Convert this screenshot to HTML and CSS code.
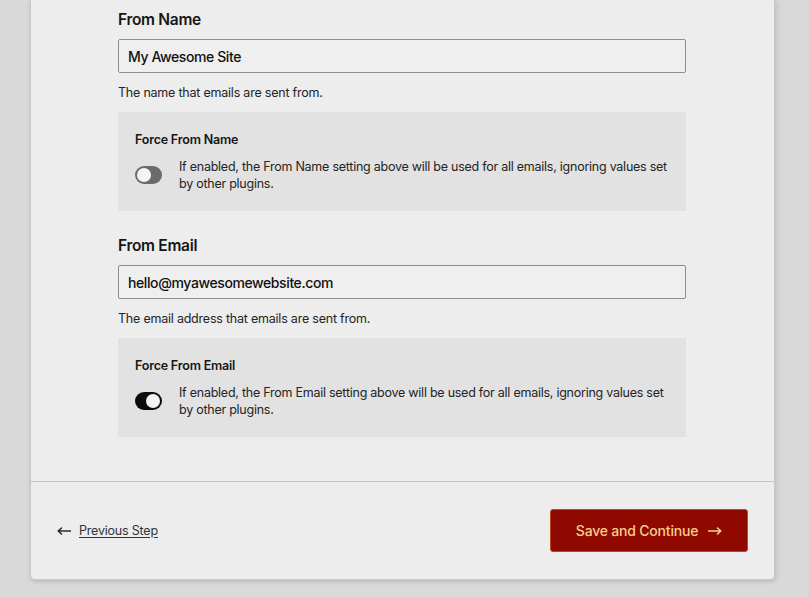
FILE: index.html
```html
<!DOCTYPE html>
<html lang="en">
<head>
<meta charset="utf-8">
<title>Sender settings</title>
<link rel="stylesheet" href="styles.css">
</head>
<body>
<div class="card">
  <div class="content">
    <div class="field">
      <label class="label">From Name</label>
      <div class="input">My Awesome Site</div>
      <p class="help">The name that emails are sent from.</p>
      <div class="box">
        <div class="box-title">Force From Name</div>
        <div class="box-row">
          <span class="toggle"><span class="knob"></span></span>
          <p class="box-desc">If enabled, the From Name setting above will be used for all emails, ignoring values set by other plugins.</p>
        </div>
      </div>
    </div>
    <div class="field second">
      <label class="label">From Email</label>
      <div class="input">hello@myawesomewebsite.com</div>
      <p class="help">The email address that emails are sent from.</p>
      <div class="box">
        <div class="box-title">Force From Email</div>
        <div class="box-row">
          <span class="toggle on"><span class="knob"></span></span>
          <p class="box-desc">If enabled, the From Email setting above will be used for all emails, ignoring values set by other plugins.</p>
        </div>
      </div>
    </div>
  </div>
  <div class="footer">
    <a class="prev" href="#"><svg class="prev-arrow" width="14" height="8" viewBox="0 0 14 8"><path d="M13.5 4H1.5M4.5 1L1.2 4L4.5 7" fill="none" stroke="#2a2a2a" stroke-width="1.6" stroke-linecap="round" stroke-linejoin="round"/></svg><span class="prev-text">Previous Step</span></a>
    <button class="save"><span>Save and Continue</span><svg class="save-arrow" width="14" height="8" viewBox="0 0 14 8"><path d="M0.5 4H12.5M9.5 1L12.8 4L9.5 7" fill="none" stroke="#f6cf8d" stroke-width="1.6" stroke-linecap="round" stroke-linejoin="round"/></svg></button>
  </div>
</div>
</body>
</html>
```

FILE: styles.css
```css
html, body {
  margin: 0;
  padding: 0;
}
body {
  background: #d9d9d9;
  font-family: Inter, "Noto Sans", "Liberation Sans", sans-serif;
  color: #1d1d1d;
  height: 597px;
  overflow: hidden;
}
.card {
  margin-left: 30px;
  width: 743px;
  background: #ededed;
  border: 1px solid #c9c9c9;
  border-top: none;
  border-radius: 0 0 5px 5px;
  box-shadow: 0 2px 4px rgba(0,0,0,0.12), 4px 0 6px rgba(0,0,0,0.05);
}
.content {
  padding: 10px 88px 44px 87px;
}
.field.second {
  margin-top: 25px;
}
.label {
  display: block;
  font-size: 15.5px;
  line-height: 20px;
  font-weight: 600;
  color: #161616;
  letter-spacing: -0.3px;
}
.input {
  margin-top: 9px;
  height: 30px;
  padding-top: 2px;
  border: 1px solid #8e8e8e;
  border-radius: 2px;
  background: #efefef;
  font-size: 14px;
  font-weight: 500;
  line-height: 30px;
  padding-left: 9px;
  box-sizing: content-box;
  width: 557px;
  color: #111;
  letter-spacing: -0.4px;
}
.help {
  margin: 11px 0 0;
  font-size: 12.5px;
  line-height: 18px;
  color: #242424;
  letter-spacing: -0.22px;
}
.box {
  margin-top: 10px;
  background: #e2e2e2;
  padding: 19px 17px 19px 17px;
  width: 534px;
}
.box-title {
  font-size: 12.5px;
  line-height: 17px;
  font-weight: 600;
  color: #161616;
  letter-spacing: -0.2px;
}
.box-row {
  margin-top: 10px;
  display: flex;
  align-items: center;
  gap: 17px;
}
.toggle {
  flex: none;
  position: relative;
  width: 27px;
  height: 18px;
  border-radius: 9px;
  background: #6b6b6b;
}
.toggle .knob {
  position: absolute;
  top: 2px;
  left: 2px;
  width: 14px;
  height: 14px;
  border-radius: 50%;
  background: #f4f4f4;
}
.toggle.on {
  background: #0c0c0c;
}
.toggle.on .knob {
  left: 11px;
}
.box-desc {
  margin: 0;
  font-size: 12.5px;
  line-height: 17px;
  color: #242424;
  letter-spacing: -0.25px;
}
.footer {
  border-top: 1px solid #c4c4c4;
  display: flex;
  align-items: center;
  justify-content: space-between;
  padding: 27px 26px 27px 26px;
}
.prev {
  display: flex;
  align-items: center;
  gap: 8px;
  color: #333;
  font-size: 12.5px;
  letter-spacing: -0.2px;
  text-decoration: none;
}
.prev-text {
  text-decoration: underline;
  text-underline-offset: 2px;
}
.save {
  width: 198px;
  height: 43px;
  background: #8f0900;
  border: 1px solid #c1461c;
  border-radius: 3px;
  color: #f6cf8d;
  font-family: Inter, "Noto Sans", "Liberation Sans", sans-serif;
  font-size: 14px;
  font-weight: 500;
  letter-spacing: -0.2px;
  padding: 0;
  cursor: pointer;
  display: flex;
  align-items: center;
  justify-content: center;
  gap: 10px;
}
```
